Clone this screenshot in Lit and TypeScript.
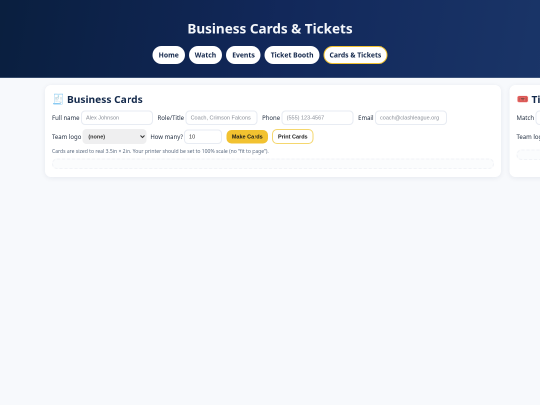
import { LitElement, html, css } from "lit";
import { customElement } from "lit/decorators.js";

@customElement("app-root")
export class AppRoot extends LitElement {
  static styles = css`
    :host { display: block; width: 540px; height: 405px; overflow: hidden; background: #f7f9fc; }
    .page { width: 1080px; height: 810px; overflow: hidden; transform: scale(.5); transform-origin: 0 0; will-change: transform; font-family: "Noto Sans", sans-serif; color: #0f2240; }
    header { height: 156px; box-sizing: border-box; padding-top: 36px; border-bottom: 1px solid #5f7391; background: linear-gradient(100deg, #0a1f3f 0%, #12285a 50%, #1a3568 100%); display: flex; flex-direction: column; align-items: center; }
    h1 { margin: 0; font-size: 27px; line-height: 42px; font-weight: 700; color: #f4f7fb; }
    nav { display: flex; gap: 8px; margin-top: 14px; }
    nav a { box-sizing: border-box; height: 36px; padding: 0 12px; border-radius: 18px; background: #fff; color: #12264a; font-size: 13.6px; font-weight: 700; line-height: 36px; white-space: nowrap; }
    nav a.active { border: 2px solid #f2c230; line-height: 32px; padding: 0 10px; }
    main { display: flex; gap: 17px; padding: 14px 0 0 90px; width: 1800px; align-items: flex-start; }
    .card { box-sizing: border-box; background: #fff; border-radius: 12px; box-shadow: 0 2px 12px rgba(20, 40, 80, .08); padding: 12px 14px 14px; height: 184px; flex: none; }
    .c1 { width: 912px; }
    .c2 { width: 600px; }
    h2 { margin: 0; font-size: 20.4px; line-height: 32px; font-weight: 700; color: #13294b; display: flex; align-items: center; gap: 5px; }
    .emoji { font-family: "Noto Color Emoji", "DejaVu Sans", sans-serif; font-size: 20px; line-height: 32px; }
    .row { display: flex; align-items: center; margin-top: 6px; height: 30px; font-size: 12px; color: #263244; white-space: nowrap; }
    .row + .row { margin-top: 8px; }
    input { box-sizing: border-box; width: 144px; height: 29px; border: 2px solid #e8ecf3; border-radius: 8px; background: #fff; font: 11px "Liberation Sans", sans-serif; color: #333; padding: 0 8px; margin: 0 9px 0 3px; outline: none; }
    input::placeholder { color: #8a8f98; }
    input.qty { width: 76px; margin-left: 2px; }
    select { box-sizing: border-box; width: 128px; height: 30px; background: #efeff0; border: none; border-radius: 8px; font: 700 11px "Liberation Sans", sans-serif; color: #333; padding: 0 8px; margin: 0 8px 0 2px; outline: none; }
    button { box-sizing: border-box; height: 27px; border-radius: 10px; border: none; font: 700 11px "Liberation Sans", sans-serif; color: #1a1a1a; padding: 0; }
    .gold { width: 83px; background: #f2c230; margin-right: 8px; }
    .ghost { width: 83px; height: 30px; background: #fff; border: 2px solid #f5d76e; }
    .note { margin-top: 6px; font-size: 10.1px; line-height: 16px; color: #5c6b80; white-space: nowrap; }
    .box { box-sizing: border-box; height: 21px; margin-top: 7px; border: 2px dashed #f1f3f7; border-radius: 10px; background: #fbfcfd; }
    .row.second { margin-top: 8px; }
    .box.second { margin-top: 11px; }
  `;

  render() {
    return html`
      <div class="page">
      <header>
        <h1>Business Cards &amp; Tickets</h1>
        <nav>
          <a>Home</a><a>Watch</a><a>Events</a><a>Ticket Booth</a><a class="active">Cards &amp; Tickets</a>
        </nav>
      </header>
      <main>
        <section class="card c1">
          <h2><span class="emoji">🧾</span>Business Cards</h2>
          <div class="row">
            Full name<input placeholder="Alex Johnson" />
            Role/Title<input placeholder="Coach, Crimson Falcons" />
            Phone<input placeholder="(555) 123-4567" />
            Email<input placeholder="coach@clashleague.org" />
          </div>
          <div class="row">
            Team logo<select><option>(none)</option></select>
            How many?<input class="qty" value="10" />
            <button class="gold">Make Cards</button><button class="ghost">Print Cards</button>
          </div>
          <div class="note">Cards are sized to real 3.5in × 2in. Your printer should be set to 100% scale (no “fit to page”).</div>
          <div class="box"></div>
        </section>
        <section class="card c2">
          <h2><span class="emoji">🎟️</span>Tickets</h2>
          <div class="row">Match<input /></div>
          <div class="row second">Team logo</div>
          <div class="box second"></div>
        </section>
      </main>
      </div>
    `;
  }
}
